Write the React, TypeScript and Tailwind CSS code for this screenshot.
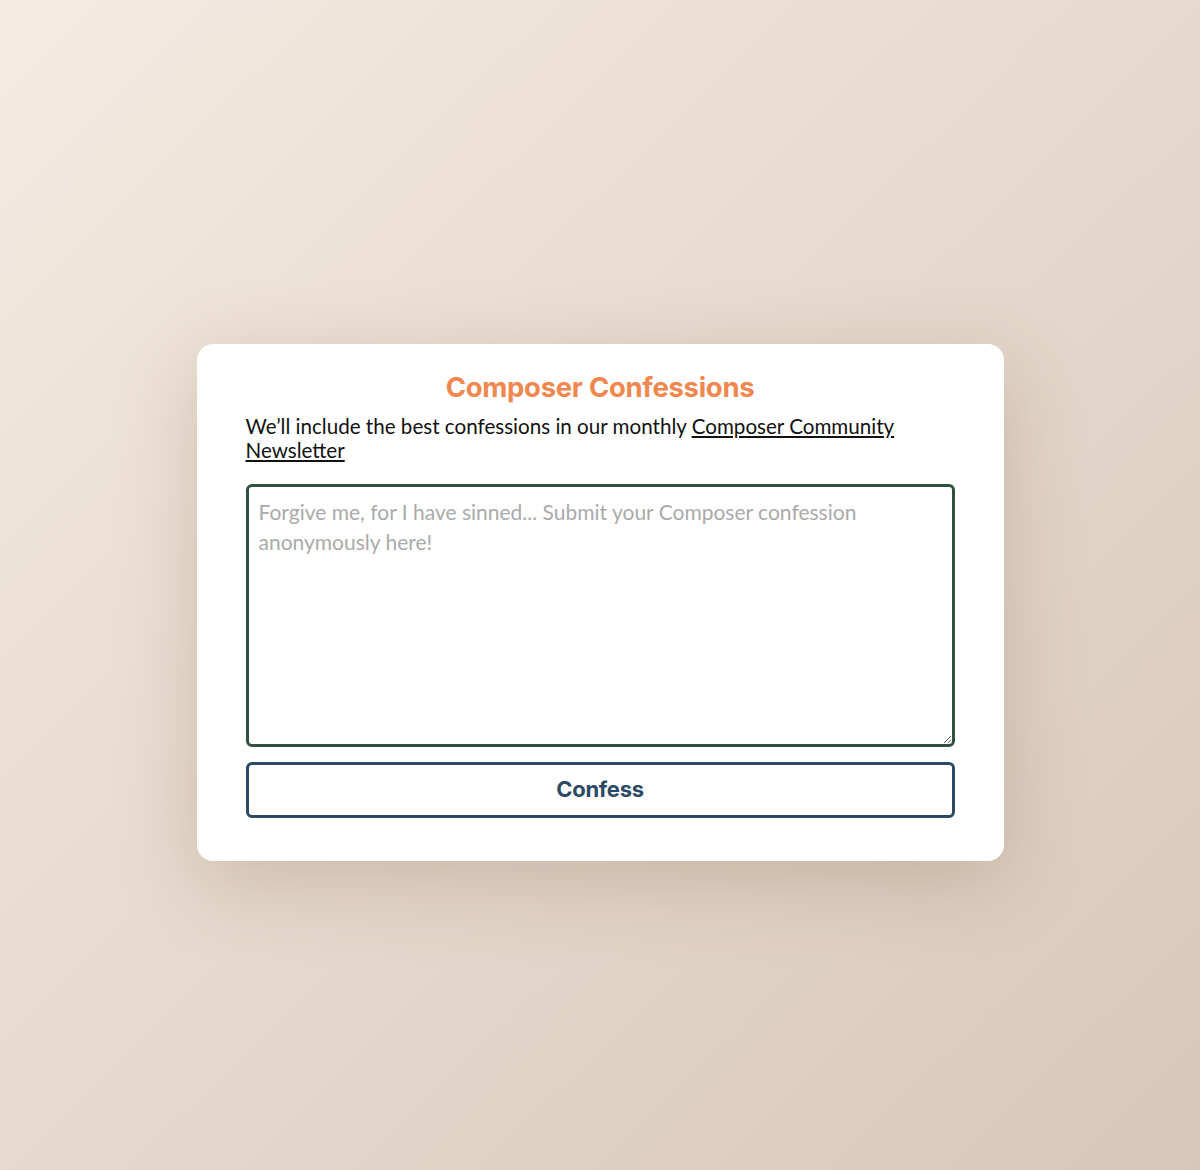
import React, { useState } from 'react';

const App: React.FC = () => {
    const [text, setText] = useState('');

    return (
        <div className="min-h-[1170px] w-full flex items-center justify-center pt-[34px] bg-gradient-to-br from-[#f5ebe2] to-[#d7c7b9]">
            <div className="w-[807px] bg-white rounded-[16px] shadow-[0_20px_80px_rgba(120,90,60,0.25)] px-[49px] pt-[26px] pb-[43px] flex flex-col">
                <h1 className="text-center text-[27.5px] leading-[34px] font-bold text-[#f0874f] tracking-[-0.3px] font-['Inter',sans-serif]">
                    Composer Confessions
                </h1>
                <p className="mt-[10px] text-[20.6px] leading-[24px] text-[#111] font-['Lato',sans-serif]">
                    We’ll include the best confessions in our monthly{' '}
                    <a href="#" className="underline">Composer Community Newsletter</a>
                </p>
                <textarea
                    value={text}
                    onChange={e => setText(e.target.value)}
                    placeholder="Forgive me, for I have sinned... Submit your Composer confession anonymously here!"
                    className="mt-[22px] h-[263px] w-full border-[3px] border-[#2f5240] rounded-[6px] px-[10px] py-[10px] text-[21px] leading-[30px] text-[#222] placeholder:text-[#aaaaaa] font-['Lato',sans-serif] outline-none resize-y"
                />
                <button className="mt-[15px] h-[56px] w-full border-[3px] border-[#2c4a63] rounded-[6px] text-[22px] font-bold text-[#2c4a63] tracking-[-0.3px] font-['Inter',sans-serif] bg-white">
                    Confess
                </button>
            </div>
        </div>
    );
};

export default App;
